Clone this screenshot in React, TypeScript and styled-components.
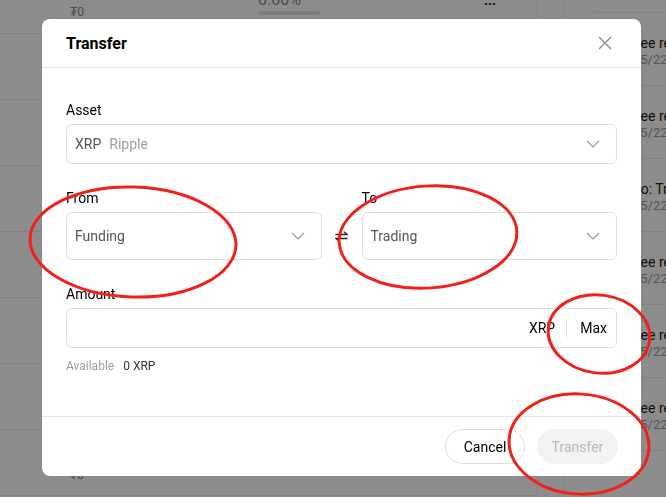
import styled, { createGlobalStyle } from "styled-components";

const GlobalStyle = createGlobalStyle`
  html, body {
    margin: 0;
    padding: 0;
  }
  body {
    font-family: Roboto, "Liberation Sans", Arial, sans-serif;
    background: #fff;
    overflow: hidden;
  }
  * {
    box-sizing: border-box;
  }
  #root {
    width: 666px;
    height: 497px;
  }
`;

const sideItems = [
  { title: "Fee rebate", date: "05/22/2024" },
  { title: "Fee rebate", date: "05/22/2024" },
  { title: "To: Trading", date: "05/22/2024" },
  { title: "Fee rebate", date: "05/22/2024" },
  { title: "Fee rebate", date: "05/22/2024" },
  { title: "Fee rebate", date: "05/22/2024" },
];

const Chevron = () => (
  <svg width="14" height="8" viewBox="0 0 14 8" fill="none">
    <path d="M1 1l6 6 6-6" stroke="#9a9a9a" strokeWidth="1.2" />
  </svg>
);

export default function App() {
  return (
    <>
      <GlobalStyle />
      <Page>
        <Main>
          <SummaryRow>
            <AssetCell>₮0</AssetCell>
            <PctCell>
              <PctText>0.00%</PctText>
              <Bar />
            </PctCell>
            <Dots>...</Dots>
          </SummaryRow>
          {[0, 1, 2, 3, 4, 5, 6].map((i) => (
            <TableRow key={i}>
              <AssetCell>₮0</AssetCell>
            </TableRow>
          ))}
        </Main>
        <Gutter />
        <Side>
          <SideList>
            {sideItems.map((item, i) => (
              <SideItem key={i}>
                <SideTitle>{item.title}</SideTitle>
                <SideDate>{item.date}</SideDate>
              </SideItem>
            ))}
          </SideList>
        </Side>
      </Page>

      <Overlay>
        <Modal>
          <Header>
            <Title>Transfer</Title>
            <CloseButton aria-label="close">
              <svg width="14" height="14" viewBox="0 0 14 14" fill="none">
                <path d="M1 1l12 12M13 1L1 13" stroke="#8a8a8a" strokeWidth="1.4" />
              </svg>
            </CloseButton>
          </Header>

          <Body>
            <Field>
              <Label>Asset</Label>
              <SelectBox $height={40}>
                <SelectValue>
                  <Code>XRP</Code>
                  <Muted>Ripple</Muted>
                </SelectValue>
                <Chevron />
              </SelectBox>
            </Field>

            <AccountRow>
              <Field>
                <Label>From</Label>
                <SelectBox $height={48}>
                  <SelectValue>
                    <Code>Funding</Code>
                  </SelectValue>
                  <Chevron />
                </SelectBox>
              </Field>
              <SwapIcon>
                <svg width="13" height="11" viewBox="0 0 13 11" fill="none">
                  <path d="M0.5 3.5h11.5L9 0.8" stroke="#222" strokeWidth="1.3" />
                  <path d="M12.5 7.5H1L4 10.2" stroke="#222" strokeWidth="1.3" />
                </svg>
              </SwapIcon>
              <Field>
                <Label>To</Label>
                <SelectBox $height={48}>
                  <SelectValue>
                    <Code>Trading</Code>
                  </SelectValue>
                  <Chevron />
                </SelectBox>
              </Field>
            </AccountRow>

            <Field>
              <Label>Amount</Label>
              <AmountBox>
                <AmountInput />
                <Unit>XRP</Unit>
                <Separator />
                <MaxButton>Max</MaxButton>
              </AmountBox>
              <Available>
                <Muted>Available</Muted>
                <span>0 XRP</span>
              </Available>
            </Field>
          </Body>

          <Footer>
            <CancelButton>Cancel</CancelButton>
            <SubmitButton disabled>Transfer</SubmitButton>
          </Footer>
        </Modal>
      </Overlay>

      <Annotations width="666" height="497" viewBox="0 0 666 497">
        <ellipse cx="133" cy="242" rx="103" ry="55" transform="rotate(2 133 242)" />
        <ellipse cx="428" cy="237" rx="89" ry="51" transform="rotate(-4 428 237)" />
        <ellipse cx="599" cy="334" rx="51" ry="39" transform="rotate(8 599 334)" />
        <ellipse cx="579" cy="444" rx="70" ry="50" transform="rotate(4 579 444)" />
      </Annotations>
    </>
  );
}

/* background page */

const Page = styled.div`
  display: flex;
  width: 666px;
  height: 497px;
  overflow: hidden;
  background: #fff;
`;

const Main = styled.div`
  width: 538px;
  flex-shrink: 0;
  display: flex;
  flex-direction: column;
  border-right: 1px solid #ebebeb;
`;

const SummaryRow = styled.div`
  height: 34px;
  flex-shrink: 0;
  display: flex;
  align-items: flex-start;
  padding-left: 70px;
  border-bottom: 1px solid #ebebeb;
`;

const TableRow = styled.div`
  height: 66px;
  flex-shrink: 0;
  display: flex;
  align-items: flex-start;
  padding: 33px 0 0 70px;
  border-bottom: 1px solid #ebebeb;
`;

const AssetCell = styled.div`
  width: 188px;
  padding-top: 5px;
  font-size: 12px;
  line-height: 14px;
  color: #8a8a8a;
`;

const PctCell = styled.div`
  width: 226px;
  display: flex;
  flex-direction: column;
  gap: 3px;
  margin-top: -9px;
`;

const PctText = styled.div`
  font-size: 16px;
  line-height: 17px;
  color: #8a8a8a;
`;

const Bar = styled.div`
  width: 62px;
  height: 4px;
  border-radius: 2px;
  background: #e3e3e3;
`;

const Dots = styled.div`
  margin-top: -8px;
  font-size: 14px;
  font-weight: 700;
  color: #222;
`;

const Gutter = styled.div`
  width: 26px;
  flex-shrink: 0;
  border-right: 1px solid #ebebeb;
`;

const Side = styled.div`
  flex: 1;
  padding: 12px 0 0 31px;
`;

const SideList = styled.div`
  border-top: 1px solid #ebebeb;
  display: flex;
  flex-direction: column;
`;

const SideItem = styled.div`
  height: 73px;
  padding: 21px 0 0 38px;
  border-bottom: 1px solid #ebebeb;
  white-space: nowrap;
`;

const SideTitle = styled.div`
  font-size: 14px;
  line-height: 18px;
  color: #1a1a1a;
`;

const SideDate = styled.div`
  font-size: 13px;
  line-height: 16px;
  color: #9a9a9a;
`;

/* modal */

const Overlay = styled.div`
  position: fixed;
  inset: 0;
  background: rgba(0, 0, 0, 0.45);
  padding: 19px 0 0 42px;
`;

const Modal = styled.div`
  width: 599px;
  height: 457px;
  background: #fff;
  border-radius: 8px;
  display: flex;
  flex-direction: column;
  color: #000;
`;

const Header = styled.div`
  height: 49px;
  flex-shrink: 0;
  display: flex;
  align-items: center;
  justify-content: space-between;
  padding: 0 24px;
  border-bottom: 1px solid #e6e6e6;
`;

const Title = styled.h2`
  margin: 0;
  font-size: 16px;
  font-weight: 700;
  color: #000;
`;

const CloseButton = styled.button`
  width: 24px;
  height: 24px;
  padding: 0;
  border: none;
  background: none;
  display: flex;
  align-items: center;
  justify-content: center;
`;

const Body = styled.div`
  flex: 1;
  display: flex;
  flex-direction: column;
  gap: 24px;
  padding: 32px 24px 0;
`;

const Field = styled.div`
  display: flex;
  flex-direction: column;
  min-width: 0;
`;

const Label = styled.div`
  font-size: 14px;
  line-height: 20px;
  margin-bottom: 4px;
  color: #000;
`;

const SelectBox = styled.div<{ $height: number }>`
  height: ${({ $height }) => $height}px;
  display: flex;
  align-items: center;
  justify-content: space-between;
  padding: 0 16px 0 8px;
  border: 1px solid #e0e0e0;
  border-radius: 6px;
  font-size: 14px;
`;

const SelectValue = styled.div`
  display: flex;
  gap: 8px;
`;

const Code = styled.span`
  color: #555;
`;

const Muted = styled.span`
  color: #9e9e9e;
`;

const AccountRow = styled.div`
  display: grid;
  grid-template-columns: 1fr 40px 1fr;
  align-items: end;
`;

const SwapIcon = styled.div`
  height: 48px;
  display: flex;
  align-items: center;
  justify-content: center;
`;

const AmountBox = styled.div`
  height: 40px;
  display: flex;
  align-items: center;
  padding: 0 9px 0 8px;
  border: 1px solid #e0e0e0;
  border-radius: 6px;
  font-size: 14px;
`;

const AmountInput = styled.input`
  flex: 1;
  min-width: 0;
  border: none;
  outline: none;
  background: none;
  font: inherit;
`;

const Unit = styled.span`
  color: #000;
`;

const Separator = styled.span`
  width: 1px;
  height: 18px;
  margin: 0 13px 0 11px;
  background: #dedede;
`;

const MaxButton = styled.span`
  color: #000;
`;

const Available = styled.div`
  display: flex;
  gap: 9px;
  margin-top: 10px;
  font-size: 12px;
  line-height: 16px;
  color: #333;
`;

const Footer = styled.div`
  height: 60px;
  flex-shrink: 0;
  display: flex;
  align-items: center;
  justify-content: flex-end;
  gap: 12px;
  padding: 0 23px;
  border-top: 1px solid #e6e6e6;
`;

const PillButton = styled.button`
  height: 35px;
  padding: 0;
  border-radius: 18px;
  font-family: inherit;
  font-size: 14px;
`;

const CancelButton = styled(PillButton)`
  width: 80px;
  border: 1px solid #dcdcdc;
  background: #fff;
  color: #000;
`;

const SubmitButton = styled(PillButton)`
  width: 81px;
  border: none;
  background: #f2f2f2;
  color: #b9b9b9;
`;

const Annotations = styled.svg`
  position: fixed;
  top: 0;
  left: 0;
  pointer-events: none;
  fill: none;
  stroke: #f2201a;
  stroke-width: 3;
`;
